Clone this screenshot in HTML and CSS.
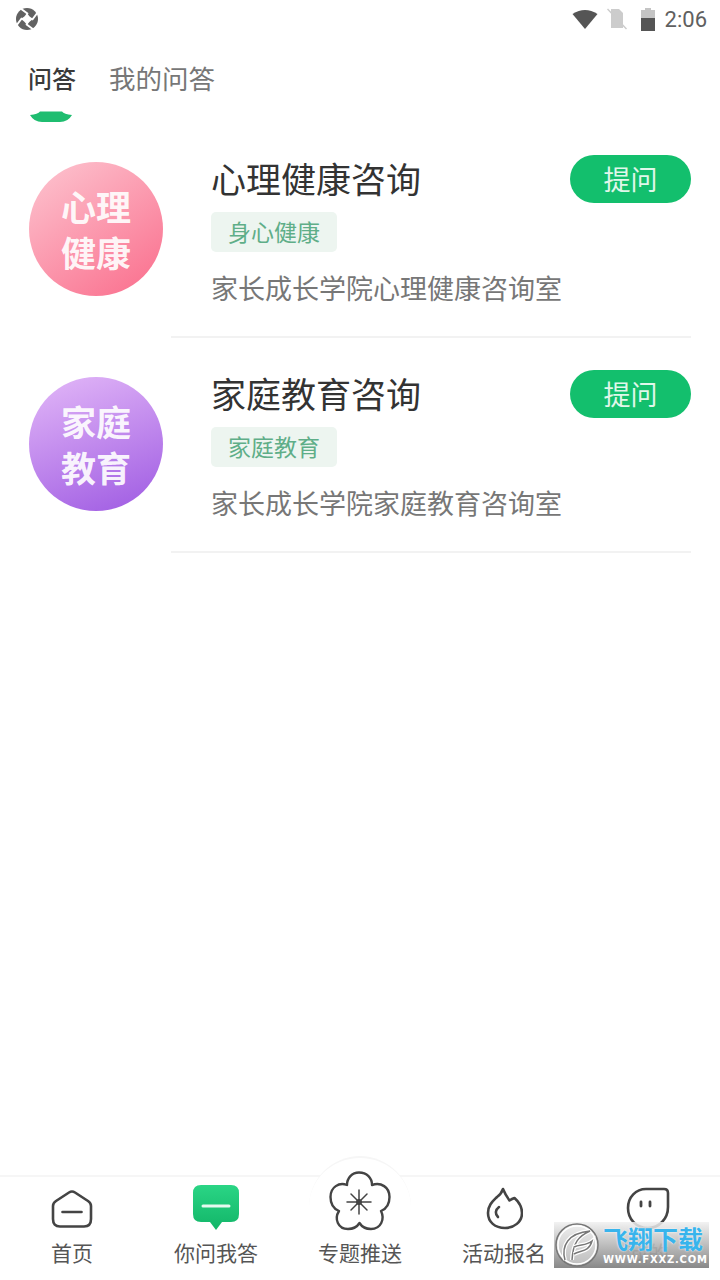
FILE: index.html
```html
<!DOCTYPE html>
<html lang="zh-CN">
<head>
  <meta charset="UTF-8" />
  <meta name="viewport" content="width=device-width, initial-scale=1.0"/>
  <title>问答</title>
  <link rel="stylesheet" href="styles.css">
</head>
<body>
  <div class="phone">
    <div class="status-bar">
      <svg width="24" height="24" viewBox="0 0 24 24">
        <circle cx="12" cy="12" r="11" fill="#626262"/>
        <path fill="#fff" d="M12 5.500 Q14 10 18.500 12 Q14 14 12 18.500 Q10 14 5.500 12 Q10 10 12 5.500 Z"/>
        <path stroke="#fff" stroke-width="2" d="M13 7 L5 1 M17 13 L23 5 M11 17 L19 23 M7 11 L1 19"/>
      </svg>
      <div class="status-right">
        <svg class="status-wifi" width="26" height="20" viewBox="0 0 26 20"><path fill="#555" d="M0.500 5 Q13 -3 25.500 5 L13 20 Z"/></svg>
        <svg class="status-sim" width="20" height="22" viewBox="0 0 20 22">
          <path fill="#ccc" d="M4 1 H12 L16 5 V20 H4 Z"/>
          <path stroke="#ccc" stroke-width="1.500" fill="none" d="M0.500 1 L19.500 21"/>
        </svg>
        <svg class="status-battery" width="14" height="23" viewBox="0 0 14 23">
          <path fill="#c4c4c4" d="M4 0 H10 V2 H14 V10 H0 V2 H4 Z"/>
          <rect fill="#555" x="0" y="10" width="14" height="13"/>
        </svg>
        <span class="status-time">2:06</span>
      </div>
    </div>

    <div class="tabs">
      <div class="tab tab-active">
        问答
        <svg class="tab-mark" width="42" height="11" viewBox="0 0 42 11">
          <path fill="#1fbd70" d="M10 0.500 H32 Q34 3 42 4 Q38 11 30 11 H12 Q4 11 0 4 Q8 3 10 0.500 Z"/>
        </svg>
      </div>
      <div class="tab">我的问答</div>
    </div>

    <div class="list">
      <div class="item">
        <div class="avatar avatar-pink">心理<br>健康</div>
        <div class="item-body">
          <div class="item-top">
            <div class="item-title">心理健康咨询</div>
            <div class="ask-btn">提问</div>
          </div>
          <span class="tag">身心健康</span>
          <div class="item-desc">家长成长学院心理健康咨询室</div>
        </div>
      </div>
      <div class="item">
        <div class="avatar avatar-purple">家庭<br>教育</div>
        <div class="item-body">
          <div class="item-top">
            <div class="item-title">家庭教育咨询</div>
            <div class="ask-btn">提问</div>
          </div>
          <span class="tag">家庭教育</span>
          <div class="item-desc">家长成长学院家庭教育咨询室</div>
        </div>
      </div>
    </div>

    <div class="tabbar">
      <div class="tabbar-bump"></div>
      <div class="nav-item">
        <svg width="44" height="42" viewBox="0 0 44 42" fill="none" stroke="#444" stroke-width="2.600" stroke-linejoin="round" stroke-linecap="round">
          <path d="M3 17 Q3 14 6 12 L19 3.500 Q22 1.500 25 3.500 L38 12 Q41 14 41 17 V30 Q41 37.500 34 37.500 H10 Q3 37.500 3 30 Z"/>
          <path d="M12.500 23 H31.500"/>
        </svg>
        <span>首页</span>
      </div>
      <div class="nav-item">
        <svg width="48" height="46" viewBox="0 0 48 46">
          <defs>
            <linearGradient id="chat-grad" x1="0" y1="0" x2="0" y2="1">
              <stop offset="0" stop-color="#2ad585"/>
              <stop offset="1" stop-color="#12b568"/>
            </linearGradient>
          </defs>
          <path fill="url(#chat-grad)" d="M9 0 H39 Q47 0 47 8 V29 Q47 37 39 37 H30 L24 45 L18 37 H9 Q1 37 1 29 V8 Q1 0 9 0 Z"/>
          <path stroke="#e6f9ef" stroke-width="3" stroke-linecap="round" d="M11 21 H37"/>
        </svg>
        <span>你问我答</span>
      </div>
      <div class="nav-item">
        <svg width="62" height="60" viewBox="0 0 62 60" fill="none" stroke="#444" stroke-width="2.400" stroke-linejoin="round" stroke-linecap="round">
          <path d="M30 1.500 C38 1.500 43 7 43 14 C52 11 60.500 16 60.500 26 C60.500 33 57 38 52 40 C56 48 52 58 42 58 C37 58 33 56 30.500 52 C28 56 24 58 19 58 C9 58 5 48 10 40 C5 38 1.500 33 1.500 26 C1.500 16 10 11 18 14 C18 7 23 1.500 30 1.500 Z"/>
          <path stroke-width="1.500" d="M30 19 V43 M18 31 H42 M22 23 L38 39 M38 23 L22 39"/>
          <circle cx="30" cy="31" r="3" fill="#444" stroke="none"/>
        </svg>
        <span>专题推送</span>
      </div>
      <div class="nav-item">
        <svg width="38" height="44" viewBox="0 0 38 44" fill="none" stroke="#444" stroke-width="2.600" stroke-linejoin="round" stroke-linecap="round">
          <path d="M18 2 C20 7 22 10 24.500 13.500 C26 12.500 28 11.500 29.500 11 C34 15 37 20 37 26 C37 35 29 41 20 41 C10 41 3 35 3 26 C3 18 8 14 12 10 C15 8 17 5 18 2 Z"/>
          <path d="M14 20 C10 23 10 27 13 30"/>
        </svg>
        <span>活动报名</span>
      </div>
      <div class="nav-item">
        <svg width="44" height="44" viewBox="0 0 44 44" fill="none" stroke="#444" stroke-width="2.600" stroke-linejoin="round" stroke-linecap="round">
          <path d="M20 2 H38 Q42 2 42 6 V20 C42 32 33 41 22 41 C10 41 2 32 2 21 C2 10 10 2 20 2 Z"/>
          <path stroke-width="2.800" d="M15 15 V19 M24 15 V19"/>
        </svg>
        <span>我的</span>
      </div>
    </div>

    <div class="watermark">
      <svg class="watermark-logo" width="46" height="46" viewBox="0 0 46 46" fill="none">
        <circle cx="23" cy="23" r="21" fill="#ededed" fill-opacity="0.500" stroke="#777" stroke-width="1.500"/>
        <circle cx="23" cy="23" r="19" stroke="#fff" stroke-width="1.500"/>
        <path stroke="#fff" stroke-width="4" d="M11 38 C7 24 14 11 36 9 C25 14 19 20 18 38"/>
        <path stroke="#777" stroke-width="1.500" d="M11 38 C7 24 14 11 36 9 C25 14 19 20 18 38"/>
        <path stroke="#fff" stroke-width="4" d="M20 25 C26 22 32 24 38 19 C35 30 27 28 20 32"/>
        <path stroke="#777" stroke-width="1.500" d="M20 25 C26 22 32 24 38 19 C35 30 27 28 20 32"/>
      </svg>
      <div class="watermark-text">
        <div class="watermark-name">飞翔下载</div>
        <div class="watermark-url">WWW.FXXZ.COM</div>
      </div>
    </div>
  </div>
</body>
</html>
```

FILE: styles.css
```css
* {
  box-sizing: border-box;
}

body {
  margin: 0;
  background: white;
  font-family: "Noto Sans CJK SC", "Noto Sans", sans-serif;
}

.phone {
  position: relative;
  width: 720px;
  height: 1280px;
  display: flex;
  flex-direction: column;
  overflow: hidden;
  background: #fff;
}

/* status bar */
.status-bar {
  height: 38px;
  padding: 0 13px 0 15px;
  display: flex;
  align-items: center;
  justify-content: space-between;
}

.status-right {
  display: flex;
  align-items: center;
}

.status-wifi {
  margin-right: 9px;
}

.status-sim {
  margin-right: 14px;
}

.status-battery {
  margin-right: 10px;
}

.status-time {
  font-family: Roboto, sans-serif;
  font-size: 22px;
  color: #606060;
}

/* tabs */
.tabs {
  height: 84px;
  padding: 20px 0 0 28px;
  display: flex;
  gap: 33px;
}

.tab {
  position: relative;
  font-size: 26.500px;
  line-height: 40px;
  color: #777;
}

.tab-active {
  font-weight: 500;
  font-size: 24px;
  color: #3a3a3a;
}

.tab-mark {
  position: absolute;
  left: 2px;
  top: 53px;
}

/* list */
.list {
  flex: 1;
  padding-top: 5px;
}

.item {
  height: 215px;
  padding: 28px 29px 4px 29px;
  display: flex;
}

.avatar {
  width: 134px;
  height: 134px;
  margin-top: 7px;
  flex-shrink: 0;
  border-radius: 50%;
  display: flex;
  align-items: center;
  justify-content: center;
  text-align: center;
  font-size: 35px;
  font-weight: 700;
  line-height: 46px;
  color: rgba(255, 255, 255, 0.92);
}

.avatar-pink {
  background: linear-gradient(145deg, #fdc6d1, #fa6c8b);
}

.avatar-purple {
  background: linear-gradient(160deg, #e3b8f8, #9e5ae2);
}

.item-body {
  flex: 1;
  margin-left: 8px;
  padding-left: 40px;
  border-bottom: 2px solid #f2f2f2;
}

.item-top {
  display: flex;
  align-items: flex-start;
  justify-content: space-between;
}

.item-title {
  font-size: 35px;
  line-height: 46px;
  color: #333;
}

.ask-btn {
  width: 121px;
  height: 48px;
  border-radius: 24px;
  background: #13bf6d;
  color: #e0f7ea;
  font-size: 27px;
  line-height: 47px;
  text-align: center;
}

.tag {
  display: block;
  width: 126px;
  height: 40px;
  margin-top: 9px;
  border-radius: 5px;
  background: #edf5f0;
  color: #5fae88;
  font-size: 23px;
  line-height: 38px;
  text-align: center;
}

.item-desc {
  margin-top: 16px;
  font-size: 27px;
  line-height: 40px;
  color: #777;
  white-space: nowrap;
}

/* bottom nav */
.tabbar {
  position: relative;
  height: 105px;
  border-top: 2px solid #f6f6f6;
  display: grid;
  grid-template-columns: repeat(5, 144px);
  grid-template-rows: 103px;
}

.tabbar-bump {
  position: absolute;
  left: 309px;
  top: -21px;
  width: 102px;
  height: 51px;
  border-radius: 51px 51px 0 0;
  border-top: 2px solid #f6f6f6;
  background: #fff;
}

.nav-item {
  position: relative;
  display: flex;
  flex-direction: column;
  align-items: center;
  justify-content: flex-end;
  gap: 7px;
  padding-bottom: 14px;
  font-size: 21px;
  line-height: 28px;
  color: #555;
}

.nav-item svg {
  flex-shrink: 0;
}

/* site watermark stamped over the corner */
.watermark {
  position: absolute;
  left: 554px;
  top: 1222px;
  width: 155px;
  height: 46px;
  display: flex;
  align-items: center;
  gap: 3px;
  background: linear-gradient(rgba(240, 240, 240, 0.85), rgba(130, 130, 130, 0.95));
}

.watermark-logo {
  flex-shrink: 0;
}

.watermark-name {
  font-size: 25px;
  font-weight: 700;
  line-height: 30px;
  margin-top: -1px;
  color: #38b4ec;
  text-shadow: 0 0 2px #fff;
  white-space: nowrap;
}

.watermark-url {
  font-family: "DejaVu Sans", sans-serif;
  font-size: 10px;
  font-weight: 700;
  line-height: 14px;
  letter-spacing: 0.800px;
  color: #fff;
  white-space: nowrap;
}
```
